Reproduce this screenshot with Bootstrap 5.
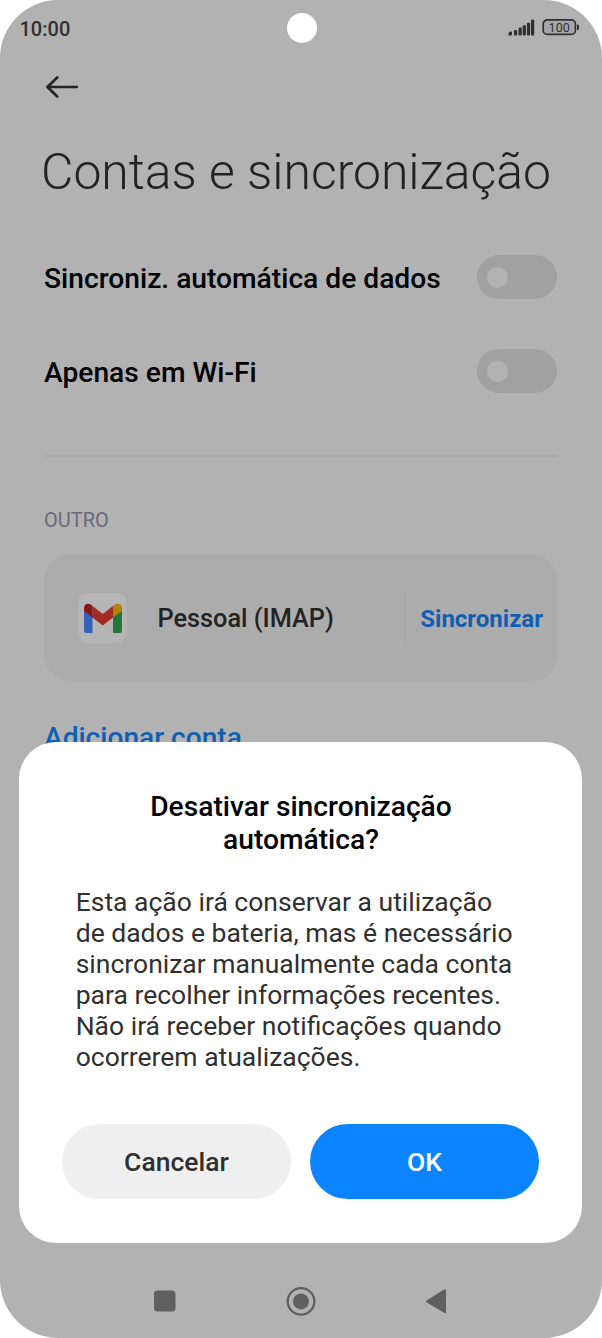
<!DOCTYPE html>
<html lang="pt">
<head>
<meta charset="utf-8">
<meta name="viewport" content="width=device-width, initial-scale=1">
<title>Contas e sincronização</title>
<link href="https://cdn.jsdelivr.net/npm/bootstrap@5.3.0/dist/css/bootstrap.min.css" rel="stylesheet">
<style>
body { font-family: Roboto, "Liberation Sans", sans-serif; background: #fff; }
.phone { width: 602px; height: 1338px; background: #b2b2b2; border-radius: 58px; }
.statusbar { height: 56px; padding: 0 22px 0 19.5px; font-size: 20px; color: #303030; }
.clock { font-weight: 500; padding-top: 1px; }
.battery-level { font-size: 12.5px; font-weight: 400; letter-spacing: .1px; }
.camera { left: 287px; top: 13px; width: 30px; height: 30px; }
.topbar { height: 62px; padding-left: 45px; }
.page-title { height: 112px; padding: 0 0 3px 41px; font-size: 49.9px; font-weight: 300; color: #232323; line-height: 1; }
.settings { padding: 0 44px; }
.setting { height: 94px; font-size: 28.2px; font-weight: 500; color: #000; }
.setting-name { padding-top: 5px; }
.toggle { width: 80px; height: 44px; background: #a1a1a1; padding-left: 10px; margin-right: 1px; }
.toggle span { width: 21px; height: 21px; background: #b2b2b2; }
.divider { height: 2px; background: #a9a9a9; margin-top: 37px; }
.section-label { font-size: 20px; line-height: 24px; color: #6a6a7c; margin-top: 51px; }
.account { height: 127px; margin-top: 22px; background: #acacac; border-radius: 27px; padding: 0 15px 0 32px; font-size: 25.3px; font-weight: 500; color: #232323; }
.account-name { padding: 3px 0 0 29.5px; }
.account-sep { width: 2px; height: 52px; background: #a7a7a7; margin-right: 14px; }
.blue-text { color: #105fb2; }
.sync { font-size: 24px; font-weight: 700; padding-top: 2px; }
.add-account { font-size: 28.1px; font-weight: 500; line-height: 32px; margin-top: 41px; }
.dialog-box { left: 19px; top: 742px; width: 563px; height: 501px; border-radius: 37px; padding: 48px 43px 44px; }
.dialog-title { font-size: 28.2px; font-weight: 500; line-height: 33px; color: #000; padding-left: 1px; }
.dialog-text { font-size: 26.5px; line-height: 31.1px; color: #303030; margin: 29.500px 0 0 13.7px; white-space: nowrap; }
.pill { height: 75px; font-size: 26.5px; font-weight: 500; border: 0; padding: 1px 0 0; }
.pill-cancel, .pill-cancel:hover { background: #efefef; color: #303030; }
.pill-ok, .pill-ok:hover { background: #0d84ff; color: #fff; }
.navkeys { height: 74px; padding: 0 155px 0 153px; }
</style>
</head>
<body>
<div class="phone position-relative overflow-hidden d-flex flex-column">
  <header class="statusbar d-flex align-items-center justify-content-between">
    <span class="clock">10:00</span>
    <svg width="72" height="20" viewBox="0 0 72 20">
      <g fill="#303030">
        <path d="M.5 17.600v-2.200q0-1 1-1.300l1.500-.5q1-.3 1 .7v2.300q0 1-1 1z"/>
        <rect x="6" y="12" width="3.200" height="5.600" rx="1"/>
        <rect x="10.600" y="9.500" width="3.200" height="8.100" rx="1"/>
        <rect x="14.700" y="7.300" width="3.200" height="10.300" rx="1"/>
        <rect x="18.900" y="4.700" width="3.200" height="12.900" rx="1"/>
        <rect x="23" y="1.500" width="3.200" height="16.100" rx="1"/>
        <path d="M69 6.500q2 0 2 1.200v3q0 1.200-2 1.200z"/>
      </g>
      <rect x="35.200" y="1.900" width="32.200" height="14.500" rx="4" fill="#a6a6a6" stroke="#303030" stroke-width="1.700"/>
      <text class="battery-level" x="51.200" y="13.800" text-anchor="middle" fill="#303030">100</text>
    </svg>
  </header>
  <div class="camera position-absolute bg-white rounded-circle"></div>
  <div class="topbar d-flex align-items-center">
    <svg width="34" height="24" viewBox="0 0 34 24" fill="none" stroke="#232323" stroke-width="2.700" stroke-linecap="round" stroke-linejoin="round"><path d="M12.300 2.500 2.400 12l9.900 9.500M2.400 12h29.400"/></svg>
  </div>
  <h1 class="page-title d-flex align-items-center m-0">Contas e sincronização</h1>
  <main class="settings flex-grow-1">
    <div class="setting d-flex align-items-center justify-content-between"><div class="setting-name">Sincroniz. automática de dados</div><div class="toggle rounded-pill d-flex align-items-center"><span class="rounded-circle"></span></div></div>
    <div class="setting d-flex align-items-center justify-content-between"><div class="setting-name">Apenas em Wi-Fi</div><div class="toggle rounded-pill d-flex align-items-center"><span class="rounded-circle"></span></div></div>
    <div class="divider"></div>
    <div class="section-label">OUTRO</div>
    <div class="account d-flex align-items-center">
      <svg width="52" height="54" viewBox="0 0 52 54">
        <rect x="1.500" y="1.500" width="50" height="51.500" rx="11" fill="#b5b5b5" stroke="#a9a9a9" stroke-width=".8"/>
        <path fill="#3462b8" d="M8 18l8.500 6.500V42H10.500Q8 42 8 39.500z"/>
        <path fill="#24773a" d="M37 24.500l9-6.500v21.500Q46 42 43.500 42H37z"/>
        <path fill="#a32b24" d="M16.500 15 26.700 23 37 15v11.500L26.700 34.500 16.500 26.500z"/>
        <path fill="#8a1714" d="M8 18.500V17c0-4 4-5.500 7-3.200l1.500 1.200v11.500L8 20z"/>
        <path fill="#b08204" d="M46 18.500V17c0-4-4-5.500-7-3.200L37 15v11.500l9-6.500z"/>
      </svg>
      <div class="account-name flex-grow-1">Pessoal (IMAP)</div>
      <div class="account-sep"></div>
      <div class="sync blue-text">Sincronizar</div>
    </div>
    <div class="add-account blue-text">Adicionar conta</div>
  </main>
  <nav class="navkeys d-flex align-items-center justify-content-between">
    <svg width="24" height="24"><rect x="1" y="1.500" width="21.500" height="21" rx="3.500" fill="#606060"/></svg>
    <svg width="30" height="30"><circle cx="15" cy="15.400" r="13.300" fill="none" stroke="#606060" stroke-width="2.300"/><circle cx="15" cy="15.400" r="8" fill="#606060"/></svg>
    <svg width="22" height="26"><path d="M2 13.400 20 2.200v22z" fill="#606060" stroke="#606060" stroke-width="2" stroke-linejoin="round"/></svg>
  </nav>
  <section class="dialog-box position-absolute bg-white d-flex flex-column">
    <div class="dialog-title text-center">Desativar sincronização<br>automática?</div>
    <div class="dialog-text">Esta ação irá conservar a utilização<br>de dados e bateria, mas é necessário<br>sincronizar manualmente cada conta<br>para recolher informações recentes.<br>Não irá receber notificações quando<br>ocorrerem atualizações.</div>
    <div class="d-flex mt-auto" style="gap:19px">
      <button class="pill pill-cancel btn rounded-pill flex-fill w-50">Cancelar</button>
      <button class="pill pill-ok btn rounded-pill flex-fill w-50">OK</button>
    </div>
  </section>
</div>
<script src="https://cdn.jsdelivr.net/npm/bootstrap@5.3.0/dist/js/bootstrap.bundle.min.js"></script>
</body>
</html>
